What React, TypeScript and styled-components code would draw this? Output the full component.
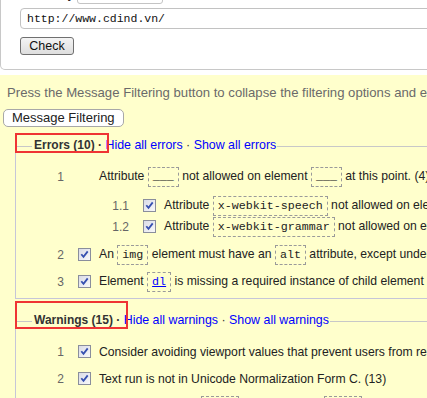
import React from "react";
import styled, { createGlobalStyle } from "styled-components";

const Global = createGlobalStyle`
  html, body { margin: 0; padding: 0; background: #fff; overflow: hidden; }
  body { font-family: "Liberation Sans", Arial, sans-serif; }
`;

const Page = styled.div`
  width: 427px;
  height: 398px;
  overflow: hidden;
  background: #fff;
`;

const FormBox = styled.div`
  margin-top: -16px;
  margin-bottom: 5px;
  width: 900px;
  box-sizing: border-box;
  border: 1px solid #c8c8c8;
  border-top: none;
  border-radius: 0 0 0 5px;
  padding: 0 0 14px 19px;
  display: flex;
  flex-direction: column;
  align-items: flex-start;
`;

const ByRow = styled.div`
  display: flex;
  align-items: flex-end;
  gap: 3px;
  height: 20px;
`;

const ByLabel = styled.span`
  font-size: 13px;
  line-height: 16px;
  margin-bottom: 2px;
  color: #222;
`;

const SelectBox = styled.div`
  width: 86px;
  height: 20px;
  box-sizing: border-box;
  border: 1px solid #c4c4c4;
  border-radius: 3px;
  background: #fff;
`;

const UrlInput = styled.div`
  margin-top: 4px;
  width: 700px;
  height: 21px;
  box-sizing: border-box;
  border: 1px solid #c2c2c2;
  border-radius: 4px;
  padding-left: 6px;
  display: flex;
  align-items: center;
  font-family: "Liberation Mono", "DejaVu Sans Mono", monospace;
  font-size: 11.5px;
  color: #111;
`;

const CheckButton = styled.div`
  margin-top: 8px;
  height: 18px;
  width: 54px;
  box-sizing: border-box;
  border: 1px solid #707070;
  border-radius: 3px;
  background: linear-gradient(#f4f4f4, #dedede);
  display: flex;
  align-items: center;
  justify-content: center;
  font-size: 12.5px;
  color: #111;
`;

const Results = styled.div`
  background: #ffffcc;
  padding: 10px 0 0 3px;
  width: 900px;
  min-height: 400px;
`;

const Intro = styled.p`
  margin: 0 0 7px 4px;
  line-height: 16px;
  font-size: 13.15px;
  color: #6a6a6a;
  white-space: nowrap;
`;

const FilterButton = styled.div`
  display: inline-flex;
  align-items: center;
  height: 18px;
  box-sizing: border-box;
  padding: 0 8px;
  border: 1px solid #a8a8a8;
  border-radius: 5px;
  background: #fff;
  font-size: 13px;
  color: #222;
`;

const Group = styled.fieldset<{ $top: number }>`
  margin: ${(p) => p.$top}px 0 0 12px;
  padding: 11px 0 6px 16px;
  border: 1px solid #c6c6d8;
  border-top-color: #c8c8c8;
  min-width: 0;
  width: 860px;
  box-sizing: border-box;
`;

const Legend = styled.legend`
  padding: 0 1px 3px 2px;
  line-height: 16px;
  font-size: 12.4px;
  color: #333;
  white-space: nowrap;
`;

const Title = styled.span<{ $t: number; $b: number; $r: number }>`
  position: relative;
  display: inline-block;
  font-weight: bold;
  font-size: 12px;
  &::after {
    content: "";
    position: absolute;
    left: -19px;
    right: ${(p) => p.$r}px;
    top: ${(p) => p.$t}px;
    bottom: ${(p) => p.$b}px;
    border: 2px solid #ef3434;
    pointer-events: none;
  }
`;

const Link = styled.a`
  color: #0000ff;
  text-decoration: none;
`;

const Row = styled.div<{ $gap: number; $sub?: boolean }>`
  display: flex;
  align-items: center;
  height: 20px;
  margin-top: ${(p) => p.$gap}px;
  padding-left: ${(p) => (p.$sub ? 65 : 0)}px;
  white-space: nowrap;
  font-size: 12.2px;
  color: #222;
`;

const Num = styled.span`
  width: 32px;
  flex: none;
  text-align: right;
  color: #666;
  font-size: 12px;
`;

const CheckSlot = styled.span`
  width: 13px;
  height: 13px;
  flex: none;
  margin: 0 8px 0 14px;
  display: flex;
`;

const Msg = styled.span`
  line-height: 20px;
`;

const Code = styled.code<{ $link?: boolean }>`
  display: inline-block;
  vertical-align: middle;
  box-sizing: border-box;
  height: 20px;
  line-height: 18px;
  padding: 0 4px;
  border: 1px dashed #9a9a9a;
  font-family: "Liberation Mono", "DejaVu Sans Mono", monospace;
  font-size: 11.67px;
  color: ${(p) => (p.$link ? "#0000ff" : "#222")};
  text-decoration: ${(p) => (p.$link ? "underline" : "none")};
`;

const CheckIcon = () => (
  <svg width="13" height="13" viewBox="0 0 13 13">
    <defs>
      <linearGradient id="cbg" x1="0" y1="0" x2="1" y2="1">
        <stop offset="0" stopColor="#d8dae6" />
        <stop offset="1" stopColor="#fafafa" />
      </linearGradient>
    </defs>
    <rect x="0.5" y="0.5" width="12" height="12" fill="url(#cbg)" stroke="#8a8e9c" />
    <path d="M3.3 6.2 L5.5 8.9 L9.7 3.4" fill="none" stroke="#3650b0" strokeWidth="1.8" />
  </svg>
);

type Item = { n: string; gap: number; sub?: boolean; check?: boolean; body: React.ReactNode };

const errors: Item[] = [
  {
    n: "1",
    gap: 0,
    body: (
      <>
        Attribute <Code>___</Code> not allowed on element <Code>___</Code> at this point. (4)
      </>
    ),
  },
  {
    n: "1.1",
    gap: 9,
    sub: true,
    check: true,
    body: (
      <>
        Attribute <Code>x-webkit-speech</Code> not allowed on element <Code>input</Code> at this point.
      </>
    ),
  },
  {
    n: "1.2",
    gap: 1,
    sub: true,
    check: true,
    body: (
      <>
        Attribute <Code>x-webkit-grammar</Code> not allowed on element <Code>input</Code> at this point.
      </>
    ),
  },
  {
    n: "2",
    gap: 8,
    check: true,
    body: (
      <>
        An <Code>img</Code> element must have an <Code>alt</Code> attribute, except under certain conditions.
      </>
    ),
  },
  {
    n: "3",
    gap: 7,
    check: true,
    body: (
      <>
        Element <Code $link>dl</Code> is missing a required instance of child element <Code>dd</Code>.
      </>
    ),
  },
];

const warnings: Item[] = [
  {
    n: "1",
    gap: 0,
    check: true,
    body: <>Consider avoiding viewport values that prevent users from resizing documents.</>,
  },
  {
    n: "2",
    gap: 7,
    check: true,
    body: <>Text run is not in Unicode Normalization Form C. (13)</>,
  },
  {
    n: "3",
    gap: 7,
    check: true,
    body: (
      <>
        Consider adding a <Code>lang</Code> attribute to the <Code>html</Code> start tag to declare the language.
      </>
    ),
  },
];

const Rows = ({ items }: { items: Item[] }) => (
  <>
    {items.map((it, i) => (
      <Row key={i} $gap={it.gap} $sub={it.sub}>
        <Num>{it.n}</Num>
        <CheckSlot>{it.check ? <CheckIcon /> : null}</CheckSlot>
        <Msg>{it.body}</Msg>
      </Row>
    ))}
  </>
);

export default function App() {
  return (
    <Page>
      <Global />
      <FormBox>
        <ByRow>
          <ByLabel>Check by</ByLabel>
          <SelectBox />
        </ByRow>
        <UrlInput>http://www.cdind.vn/</UrlInput>
        <CheckButton>Check</CheckButton>
      </FormBox>
      <Results>
        <Intro>
          Press the Message Filtering button to collapse the filtering options and error/warning/info counts.
        </Intro>
        <FilterButton>Message Filtering</FilterButton>
        <Group $top={10}>
          <Legend>
            <Title $t={-4} $b={0} $r={-7}>Errors (10) ·</Title> <Link href="#">Hide all errors</Link> ·{" "}
            <Link href="#">Show all errors</Link>
          </Legend>
          <Rows items={errors} />
        </Group>
        <Group $top={13}>
          <Legend>
            <Title $t={-11} $b={-1} $r={-8}>Warnings (15) ·</Title> <Link href="#">Hide all warnings</Link> ·{" "}
            <Link href="#">Show all warnings</Link>
          </Legend>
          <Rows items={warnings} />
        </Group>
      </Results>
    </Page>
  );
}
